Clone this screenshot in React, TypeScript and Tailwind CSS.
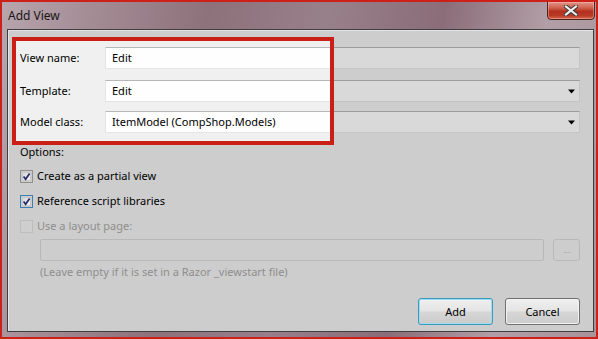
import React from 'react'

function DropArrow() {
  return (
    <svg width="7" height="5" viewBox="0 0 7 5" className="shrink-0">
      <polygon points="0,0.5 7,0.5 3.5,4.5" fill="#000" />
    </svg>
  )
}

function Field({ value, dropdown }: { value: string; dropdown?: boolean }) {
  return (
    <div className="flex-1 h-[22px] flex items-center justify-between pl-[6px] pr-[4px] bg-[#d9d9d9] border border-[#c4c4c4] border-t-[#9c9c9c]">
      <span>{value}</span>
      {dropdown && <DropArrow />}
    </div>
  )
}

function Checkbox({ checked, hover, disabled }: { checked?: boolean; hover?: boolean; disabled?: boolean }) {
  const border = disabled ? 'border-[#bdbdbd]' : hover ? 'border-[#3c7fb1]' : 'border-[#8e8f8f]'
  return (
    <div className={`w-[13px] h-[13px] border ${border} p-[1px] shrink-0`}>
      <div
        className={`w-full h-full border ${
          disabled
            ? 'border-[#d0d0d0] bg-[#cdcdcd]'
            : 'border-[#c8c8c8] bg-[linear-gradient(135deg,#d8d8d8,#f4f4f4)]'
        } relative`}
      >
        {checked && (
          <svg width="9" height="9" viewBox="0 0 9 9" className="absolute -left-[1px] -top-[1px]">
            <path d="M1.6 4.6 L3.6 7.2 L7.6 1.4" fill="none" stroke="#242a6e" strokeWidth="1.7" />
          </svg>
        )}
      </div>
    </div>
  )
}

function DialogButton({ label, isDefault }: { label: string; isDefault?: boolean }) {
  return (
    <button
      className={`w-[75px] h-[27px] rounded-[3px] border ${
        isDefault
          ? 'border-[#3c9bbd] shadow-[inset_0_0_0_1px_#9fdcf0]'
          : 'border-[#707070] shadow-[inset_0_0_0_1px_#f2f2f2]'
      } bg-[linear-gradient(#f0f0f0_0%,#e4e4e4_48%,#d6d6d6_52%,#cbcbcb_100%)] text-black`}
    >
      {label}
    </button>
  )
}

export default function App() {
  return (
    <div className="w-[598px] h-[339px] border-2 border-[#cb2119] flex flex-col bg-[linear-gradient(100deg,#b8a5ad_0%,#a48c95_14%,#8d717b_32%,#98808a_50%,#8a6d78_68%,#b29ea6_84%,#a8939b_100%)] font-['Noto_Sans',sans-serif] text-[11px] leading-[16px] overflow-hidden">
      {/* Title bar */}
      <div className="h-[27px] flex justify-between shrink-0">
        <span className="self-center pl-[6px] pt-[1px] text-[12px] text-[#161616]">Add View</span>
        <div className="self-start -mt-[1px] mr-[1px] w-[48px] h-[19px] rounded-b-[4px] border border-[#4e2520] bg-[linear-gradient(#e0968a_0%,#d0604c_35%,#b3301e_55%,#b83a26_80%,#d66a4e_100%)] flex items-center justify-center shadow-[inset_0_0_0_1px_rgba(255,200,190,0.4)]">
          <svg width="14" height="11" viewBox="0 0 14 11">
            <path d="M2 1.5 L12 9.5 M12 1.5 L2 9.5" stroke="#3a3a3a" strokeWidth="4.2" strokeLinecap="square" />
            <path d="M2 1.5 L12 9.5 M12 1.5 L2 9.5" stroke="#eeeeee" strokeWidth="2.2" strokeLinecap="square" />
          </svg>
        </div>
      </div>

      {/* Client area */}
      <div className="flex-1 ml-[5px] mr-[2px] mb-[5px] border border-[#3e3e3e] bg-[#cdcdcd] shadow-[inset_1px_1px_0_#e4e4e4] relative flex flex-col pt-[17px] pl-[12px] pr-[13px] text-black">
        {/* Name / template / model */}
        <div className="flex items-center">
          <span className="w-[85px]">View name:</span>
          <Field value="Edit" />
        </div>
        <div className="flex items-center mt-[11px]">
          <span className="w-[85px]">Template:</span>
          <Field value="Edit" dropdown />
        </div>
        <div className="flex items-center mt-[9px]">
          <span className="w-[85px]">Model class:</span>
          <Field value="ItemModel (CompShop.Models)" dropdown />
        </div>

        <div className="mt-[11px]">Options:</div>

        <div className="flex items-center gap-[4px] h-[16px] mt-[8px]">
          <Checkbox checked />
          <span>Create as a partial view</span>
        </div>
        <div className="flex items-center gap-[4px] h-[16px] mt-[9px]">
          <Checkbox checked hover />
          <span>Reference script libraries</span>
        </div>
        <div className="flex items-center gap-[4px] h-[16px] mt-[9px] text-[#8e8e8e]">
          <Checkbox disabled />
          <span>Use a layout page:</span>
        </div>

        <div className="flex gap-[9px] mt-[5px] pl-[20px]">
          <div className="flex-1 h-[22px] border border-[#b9b9b9] rounded-[2px]" />
          <div className="w-[27px] h-[22px] border border-[#b9b9b9] rounded-[3px] flex items-center justify-center text-[#a2a2a2] text-[9px]">
            ...
          </div>
        </div>
        <div className="mt-[3px] pl-[20px] text-[#8e8e8e]">(Leave empty if it is set in a Razor _viewstart file)</div>

        <div className="flex justify-end gap-[12px] mt-[18px]">
          <DialogButton label="Add" isDefault />
          <DialogButton label="Cancel" />
        </div>

        {/* Highlight annotation */}
        <div className="absolute left-[4px] top-[7px] w-[322px] h-[108px] border-4 border-[#c91f16] backdrop-brightness-[1.17]" />
      </div>
    </div>
  )
}
